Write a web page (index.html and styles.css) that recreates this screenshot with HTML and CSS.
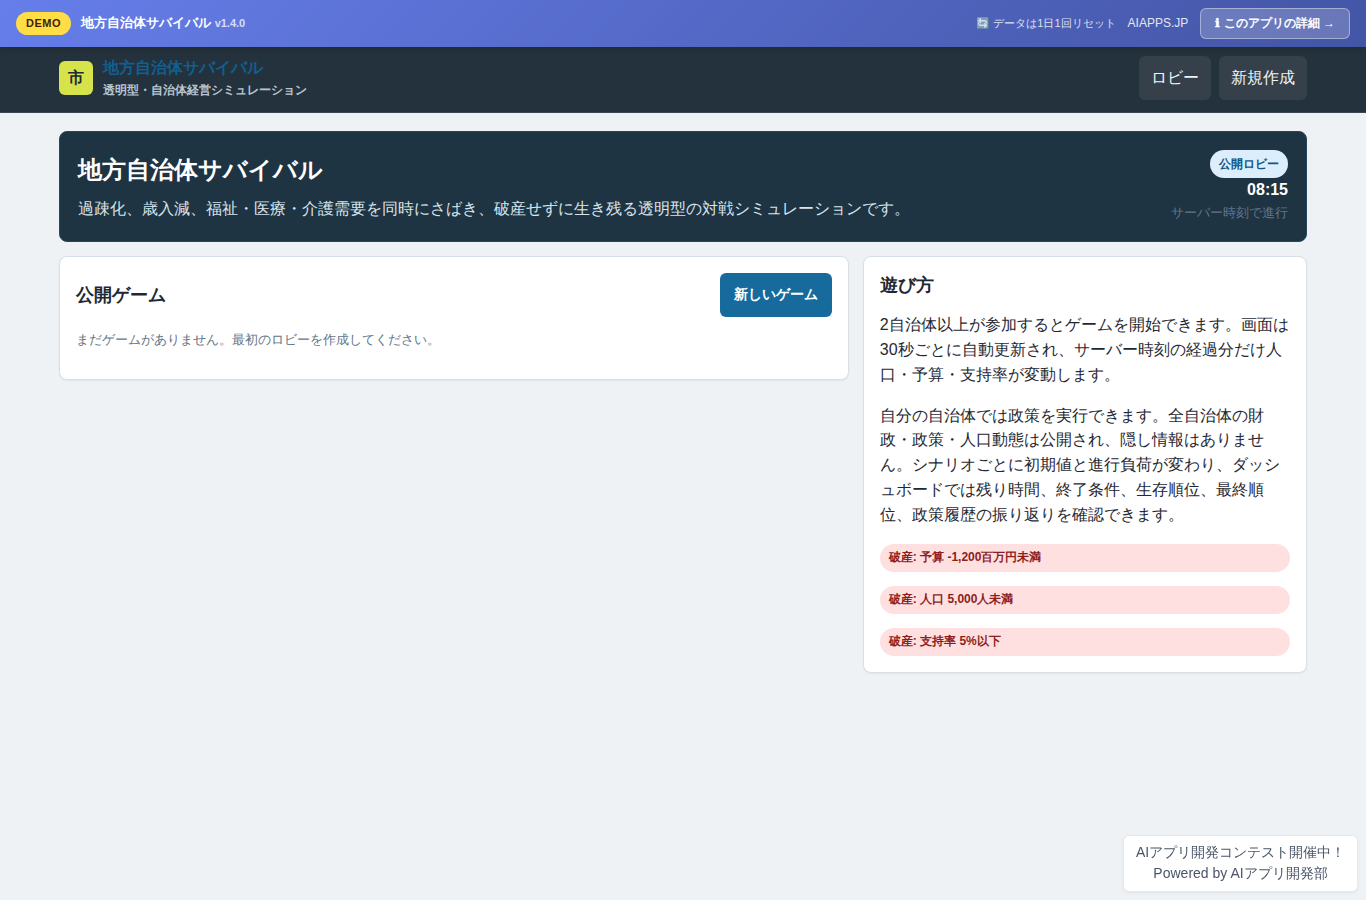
FILE: index.html
```html
<!DOCTYPE html>
<html lang="ja">
<head>
<meta charset="utf-8">
<title>地方自治体サバイバル</title>
<link rel="stylesheet" href="styles.css">
</head>
<body>
<div class="demo-bar">
  <div class="demo-left"><span class="demo-badge">DEMO</span><span class="demo-title">地方自治体サバイバル <small>v1.4.0</small></span></div>
  <div class="demo-right"><span class="demo-reset">🔄 データは1日1回リセット</span><span class="demo-site">AIAPPS.JP</span><a class="demo-link"><span class="info">ℹ</span> このアプリの詳細 →</a></div>
</div>
<header class="topbar">
  <div class="brand"><span class="brand-mark">市</span><div class="brand-text"><span class="brand-name">地方自治体サバイバル</span><span class="brand-sub">透明型・自治体経営シミュレーション</span></div></div>
  <nav class="nav"><a>ロビー</a><a>新規作成</a></nav>
</header>
<main class="shell">
  <section class="hero">
    <div><h1>地方自治体サバイバル</h1><p>過疎化、歳入減、福祉・医療・介護需要を同時にさばき、破産せずに生き残る透明型の対戦シミュレーションです。</p></div>
    <div class="clock"><span class="pill">公開ロビー</span><strong>08:15</strong><span class="clock-note">サーバー時刻で進行</span></div>
  </section>
  <div class="grid">
    <section class="card games">
      <div class="card-head"><h2>公開ゲーム</h2><a class="button">新しいゲーム</a></div>
      <p class="muted">まだゲームがありません。最初のロビーを作成してください。</p>
    </section>
    <aside class="card help">
      <h2>遊び方</h2>
      <p>2自治体以上が参加するとゲームを開始できます。画面は30秒ごとに自動更新され、サーバー時刻の経過分だけ人口・予算・支持率が変動します。</p>
      <p>自分の自治体では政策を実行できます。全自治体の財政・政策・人口動態は公開され、隠し情報はありません。シナリオごとに初期値と進行負荷が変わり、ダッシュボードでは残り時間、終了条件、生存順位、最終順位、政策履歴の振り返りを確認できます。</p>
      <div class="rules"><span>破産: 予算 -1,200百万円未満</span><span>破産: 人口 5,000人未満</span><span>破産: 支持率 5%以下</span></div>
    </aside>
  </div>
</main>
<div class="powered">AIアプリ開発コンテスト開催中！<br>Powered by AIアプリ開発部</div>
</body>
</html>
```
FILE: styles.css
```css
* { box-sizing: border-box; }
body { margin: 0; min-height: 100vh; background: #eef2f5; color: #1f2933; font-family: "Liberation Sans", sans-serif; font-size: 16px; line-height: 1.55; }
h1, h2, p { margin: 0; }
.demo-bar { position: relative; height: 47px; padding: 0 16px; display: flex; align-items: center; justify-content: space-between; background: linear-gradient(135deg, #667eea 0%, #4355a5 100%); box-shadow: 0 2px 8px rgba(0,0,0,.15); color: #fff; font-size: 13px; }
.demo-left { display: flex; align-items: center; gap: 10px; }
.demo-badge { height: 23px; padding: 0 10px; border-radius: 12px; background: #ffdd44; color: #422006; font-size: 11px; line-height: 23px; font-weight: 700; letter-spacing: .5px; }
.demo-title { font-weight: 700; }
.demo-title small { font-size: 11px; opacity: .75; }
.demo-right { display: flex; align-items: center; gap: 12px; font-size: 12px; }
.demo-reset { font-size: 11px; opacity: .8; }
.demo-site { opacity: .85; }
.demo-link { height: 31px; padding: 0 14px; border: 1px solid rgba(255,255,255,.4); border-radius: 6px; background: rgba(255,255,255,.2); font-weight: 700; line-height: 29px; }
.info { font-family: "DejaVu Sans", sans-serif; letter-spacing: .5px; -webkit-text-stroke: .6px #fff; }
.topbar { height: 66px; padding: 0 59px; display: flex; align-items: center; justify-content: space-between; background: #24323d; border-bottom: 1px solid #3b4652; }
.brand { display: flex; align-items: center; gap: 10px; margin-top: -3px; }
.brand-mark { width: 34px; height: 34px; border-radius: 6px; background: #d7e34a; display: grid; place-items: center; font-weight: 700; }
.brand-text { display: flex; flex-direction: column; font-weight: 700; }
.brand-name { color: #125e8f; line-height: 24px; }
.brand-sub { color: #b8c5d0; font-size: 12px; line-height: 20px; }
.nav { display: flex; gap: 8px; margin-top: -3px; }
.nav a { height: 44px; padding: 0 12px; border-radius: 6px; background: #35404b; color: #edf3f7; line-height: 44px; }
.shell { padding: 18px 59px; }
.hero { height: 111px; padding: 18px; display: flex; align-items: center; justify-content: space-between; border: 1px solid #29475a; border-radius: 8px; background: #1f3442; color: #fff; }
.hero h1 { font-size: 24px; line-height: 36px; margin-bottom: 9px; }
.hero p { color: #d7e4ec; }
.clock { display: flex; flex-direction: column; align-items: flex-end; }
.pill { height: 28px; padding: 0 9px; border-radius: 14px; background: #dceefb; color: #125687; font-size: 12px; font-weight: 700; line-height: 28px; }
.clock strong { line-height: 23px; margin-bottom: 2px; }
.clock-note { color: #64748b; font-size: 13px; line-height: 20px; }
.grid { margin-top: 14px; display: grid; grid-template-columns: 1.6fr .9fr; gap: 14px; align-items: start; }
.card { padding: 16px; border: 1px solid #d8e0e7; border-radius: 8px; background: #fff; box-shadow: 0 1px 2px rgba(15,23,42,.06); }
.card h2 { font-size: 18px; line-height: 24px; }
.games { height: 124px; }
.card-head { display: flex; justify-content: space-between; align-items: center; margin-bottom: 13px; }
.button { height: 44px; padding: 0 14px; border-radius: 6px; background: #176b9c; color: #fff; font-size: 14px; font-weight: 700; line-height: 42px; }
.muted { color: #647585; font-size: 13px; }
.help h2 { margin-bottom: 16.3px; }
.help p { margin-bottom: 16px; line-height: 24.8px; }
.rules { display: grid; gap: 14px; padding-top: .7px; }
.rules span { height: 28px; padding: 0 9px; border-radius: 14px; background: #ffe0e0; color: #8f1d1d; font-size: 12px; font-weight: 700; line-height: 26px; }
.powered { position: fixed; right: 8px; bottom: 8px; padding: 6px 11.6px 7px; width: 235px; border: 1px solid rgba(0,0,0,.03); background-clip: padding-box; border-radius: 6px; background-color: rgba(255,255,255,.95); box-shadow: 0 1px 3px rgba(0,0,0,.06); color: #4a5568; font-size: 14px; line-height: 21px; text-align: center; }
```
